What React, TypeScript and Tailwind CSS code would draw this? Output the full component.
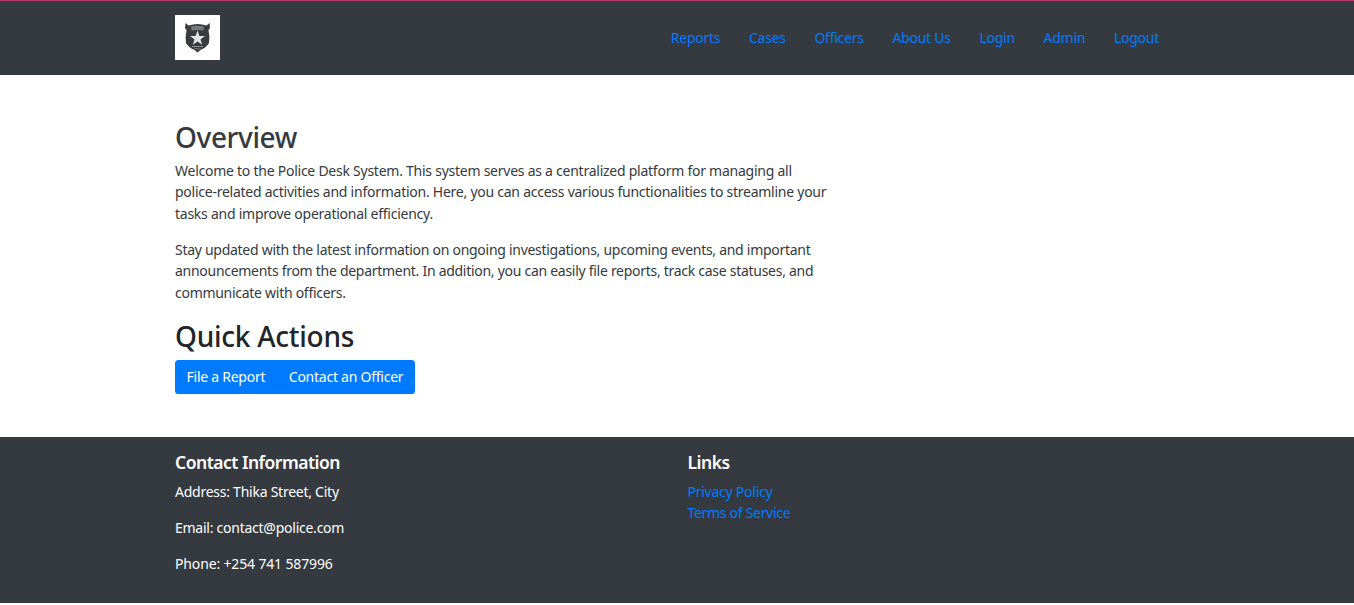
const navLinks = ["Reports", "Cases", "Officers", "About Us", "Login", "Admin", "Logout"]

function PoliceBadge() {
  return (
    <svg viewBox="0 0 45 45" className="h-[45px] w-[45px] -mt-[1px]">
      <rect width="45" height="45" fill="#ffffff" />
      <g className="blur-[0.35px]">
        <path
          d="M10.5 8 L13.5 10.5 Q18 9 22.5 9 Q27 9 31.5 10.5 L34.5 8 L35 13 L33.5 15 Q35 22 34 28 Q31 33 25.5 35 L22.5 37.5 L19.5 35 Q14 33 11 28 Q10 22 11.5 15 L10 13 Z"
          fill="#3a3b3e"
        />
        <path d="M16 11.5 Q22.5 10 29 11.5 L28.5 15.5 Q22.5 14.5 16.5 15.5 Z" fill="#77797c" />
        <path
          d="M22.5 15.5 L24.4 21 L30 21 L25.5 24.4 L27.2 29.8 L22.5 26.6 L17.8 29.8 L19.5 24.4 L15 21 L20.6 21 Z"
          fill="#e4e4e4"
        />
        <path d="M17 31.5 H28" stroke="#8f8f8f" strokeWidth="1" />
        <path d="M19 33.8 H26" stroke="#7a7a7a" strokeWidth="1" />
      </g>
    </svg>
  )
}

export default function App() {
  return (
    <div className="font-['Noto_Sans',sans-serif] text-[14px] tracking-[-0.25px] leading-[21.6px] text-[#212529] bg-white">
      {/* Header */}
      <header className="h-[75px] bg-[#343a40] border-t border-[#b83b6e]">
        <div className="mx-auto w-[1034px] h-full pl-[15px] pr-[35px] flex items-center justify-between">
          <PoliceBadge />
          <nav className="flex gap-[28.7px] -mt-[1px]">
            {navLinks.map((link) => (
              <a key={link} href="#" className="text-[#007bff]">
                {link}
              </a>
            ))}
          </nav>
        </div>
      </header>

      {/* Main content */}
      <main className="h-[362px] pt-[45px]">
        <div className="mx-auto w-[1034px] px-[15px]">
          <div className="w-[654px]">
            <h2 className="text-[28px] tracking-[-0.4px] leading-[34.5px] font-medium text-[#343a40] mb-[5px]">Overview</h2>
            <p className="text-[#343a40] mb-[14.4px]">
              Welcome to the Police Desk System. This system serves as a centralized platform for managing all
              police-related activities and information. Here, you can access various functionalities to streamline
              your tasks and improve operational efficiency.
            </p>
            <p className="text-[#343a40] tracking-[-0.28px] mb-[15.4px]">
              Stay updated with the latest information on ongoing investigations, upcoming events, and important
              announcements from the department. In addition, you can easily file reports, track case statuses, and
              communicate with officers.
            </p>
            <h2 className="text-[28px] tracking-[-0.25px] leading-[34.5px] font-medium mb-[7px]">Quick Actions</h2>
            <div className="inline-flex rounded-[3.6px] bg-[#007bff] text-white">
              <a href="#" className="px-[11.5px] py-[6px]">File a Report</a>
              <a href="#" className="px-[12px] py-[6px]">Contact an Officer</a>
            </div>
          </div>
        </div>
      </main>

      {/* Footer */}
      <footer className="h-[166px] bg-[#343a40] text-white">
        <div className="mx-auto w-[1034px] pl-[15px] flex">
          <div className="w-[512.5px]">
            <h5 className="text-[17.5px] tracking-[-0.5px] leading-[21.6px] font-semibold mt-[15px] mb-[7px]">Contact Information</h5>
            <p className="mb-[14.4px]">Address: Thika Street, City</p>
            <p className="mb-[14.4px]">Email: contact@police.com</p>
            <p className="tracking-[-0.15px]">Phone: +254 741 587996</p>
          </div>
          <div>
            <h5 className="text-[17.5px] tracking-[-0.5px] leading-[21.6px] font-semibold mt-[15px] mb-[7px]">Links</h5>
            <ul>
              <li><a href="#" className="text-[#007bff]">Privacy Policy</a></li>
              <li><a href="#" className="text-[#007bff] tracking-[-0.3px]">Terms of Service</a></li>
            </ul>
          </div>
        </div>
      </footer>
    </div>
  )
}
